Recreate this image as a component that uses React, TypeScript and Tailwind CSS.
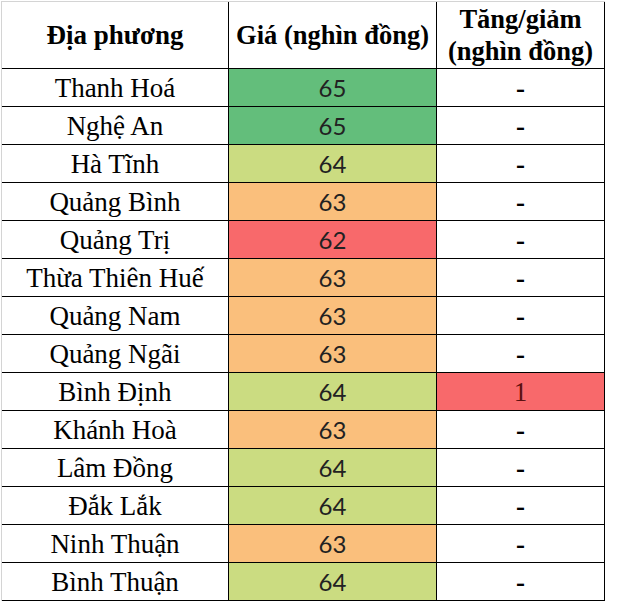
const rows: { name: string; price: number; change: string }[] = [
  { name: "Thanh Hoá", price: 65, change: "-" },
  { name: "Nghệ An", price: 65, change: "-" },
  { name: "Hà Tĩnh", price: 64, change: "-" },
  { name: "Quảng Bình", price: 63, change: "-" },
  { name: "Quảng Trị", price: 62, change: "-" },
  { name: "Thừa Thiên Huế", price: 63, change: "-" },
  { name: "Quảng Nam", price: 63, change: "-" },
  { name: "Quảng Ngãi", price: 63, change: "-" },
  { name: "Bình Định", price: 64, change: "1" },
  { name: "Khánh Hoà", price: 63, change: "-" },
  { name: "Lâm Đồng", price: 64, change: "-" },
  { name: "Đắk Lắk", price: 64, change: "-" },
  { name: "Ninh Thuận", price: 63, change: "-" },
  { name: "Bình Thuận", price: 64, change: "-" },
];

const priceBg: Record<number, string> = {
  65: "bg-[#63be7b]",
  64: "bg-[#cbdc81]",
  63: "bg-[#fabf7c]",
  62: "bg-[#f8696b]",
};

export default function App() {
  return (
    <div className="w-[617px] h-[614px] bg-white pl-px pt-px font-['Liberation_Serif',serif] text-black">
      <div className="w-[604px] border-l border-t border-[#d4d4d4]">
        {/* header */}
        <div className="grid grid-cols-[227px_208px_168px] h-[67px] border-b border-black leading-[32px]">
          <div className="flex items-center justify-center border-r border-black text-[27px] font-bold">
            Địa phương
          </div>
          <div className="flex items-center justify-center border-r border-black text-[26.5px] font-bold">
            Giá (nghìn đồng)
          </div>
          <div className="flex flex-col items-center justify-center border-r border-black text-[26.5px] font-bold">
            <span>Tăng/giảm</span>
            <span>(nghìn đồng)</span>
          </div>
        </div>
        {rows.map((r) => (
          <div
            key={r.name}
            className="grid grid-cols-[227px_208px_168px] grid-rows-[37px] h-[38px] border-b border-black leading-[30px]"
          >
            <div className="flex items-center justify-center border-r border-black text-[27px]">
              {r.name}
            </div>
            <div
              className={`flex items-center justify-center border-r border-black font-['Lato',sans-serif] text-[24px] text-[#222] ${priceBg[r.price]}`}
            >
              {r.price}
            </div>
            <div
              className={`flex items-center justify-center border-r border-black text-[27px] ${
                r.change === "1" ? "bg-[#f8696b] text-[#5a1010]" : "font-bold"
              }`}
            >
              {r.change}
            </div>
          </div>
        ))}
      </div>
    </div>
  );
}
